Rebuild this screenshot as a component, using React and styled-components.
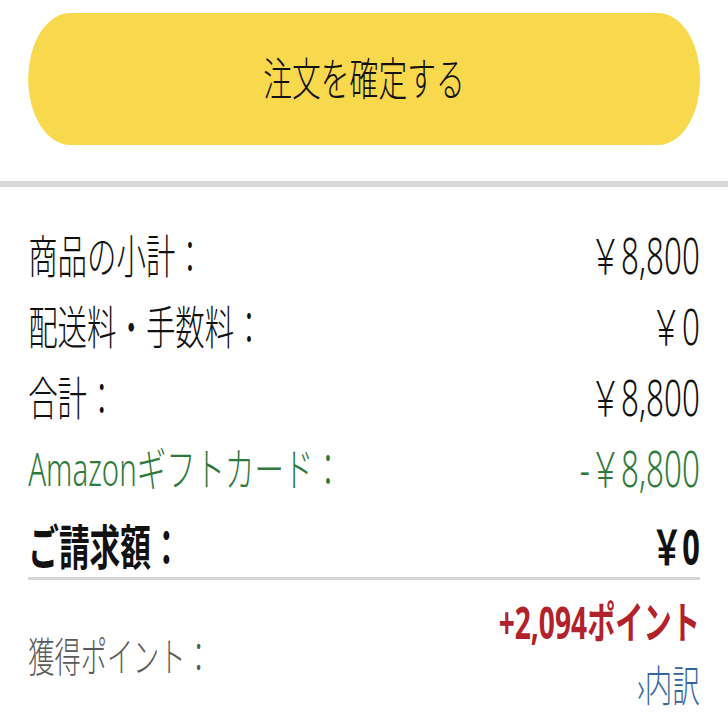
import styled, { createGlobalStyle } from "styled-components";

const GlobalStyle = createGlobalStyle`
  html, body {
    margin: 0;
    padding: 0;
    background: #ffffff;
    overflow: hidden;
  }
`;

const rows = [
  { label: "商品の小計：", value: "￥8,800" },
  { label: "配送料・手数料：", value: "￥0" },
  { label: "合計：", value: "￥8,800" },
  { label: "Amazonギフトカード：", value: "-￥8,800", tone: "green" }
];

const tones = {
  green: "#2f7a3b",
  default: "#111111"
};

function App() {
  return (
    <>
      <GlobalStyle />
      <Page>
        <ButtonArea>
          <PlaceOrder type="button">注文を確定する</PlaceOrder>
        </ButtonArea>
        <Separator />
        <Summary>
          {rows.map((r) => (
            <Row key={r.label} $color={tones[r.tone] || tones.default}>
              <span>{r.label}</span>
              <Value>{r.value}</Value>
            </Row>
          ))}
          <TotalRow>
            <span>ご請求額：</span>
            <span>￥0</span>
          </TotalRow>
          <Divider />
          <PointsRow>
            <PointsLabel>獲得ポイント：</PointsLabel>
            <PointsSide>
              <PointsValue>+2,094ポイント</PointsValue>
              <Breakdown href="#">›内訳</Breakdown>
            </PointsSide>
          </PointsRow>
        </Summary>
      </Page>
    </>
  );
}

export default App;

const Page = styled.div`
  width: 1137.5px;
  transform: scaleX(0.64);
  transform-origin: 0 0;
  font-family: "Noto Sans", "Noto Sans CJK JP", sans-serif;
  font-weight: 300;
  color: #111111;
`;

const ButtonArea = styled.div`
  padding: 13px 44px 36px;
`;

const PlaceOrder = styled.button`
  display: block;
  width: 100%;
  height: 132px;
  padding: 0 0 6px;
  border: none;
  border-radius: 66px;
  background: #f8d84c;
  color: #111111;
  font-family: inherit;
  font-size: 45px;
  font-weight: 300;
  cursor: pointer;
`;

const Separator = styled.div`
  height: 6px;
  background: #d8d8d8;
`;

const Summary = styled.div`
  padding: 30px 44px 0;
`;

const Row = styled.div`
  display: flex;
  justify-content: space-between;
  align-items: center;
  height: 71px;
  font-size: 46px;
  color: ${(p) => p.$color};
`;

const Value = styled.span`
  font-size: 49px;
`;

const TotalRow = styled.div`
  display: flex;
  justify-content: space-between;
  align-items: center;
  height: 60px;
  margin-top: 13px;
  font-size: 48px;
  font-weight: 700;
`;

const Divider = styled.div`
  height: 3px;
  margin-top: 3px;
  background: #d5d5d5;
`;

const PointsRow = styled.div`
  display: flex;
  justify-content: space-between;
  align-items: center;
  padding-top: 11px;
`;

const PointsLabel = styled.span`
  font-size: 41px;
  color: #595959;
`;

const PointsSide = styled.div`
  display: flex;
  flex-direction: column;
  align-items: flex-end;
`;

const PointsValue = styled.span`
  font-size: 44px;
  line-height: 63px;
  font-weight: 700;
  color: #b1222a;
`;

const Breakdown = styled.a`
  font-size: 43px;
  line-height: 63px;
  color: #35659f;
  text-decoration: none;
`;
